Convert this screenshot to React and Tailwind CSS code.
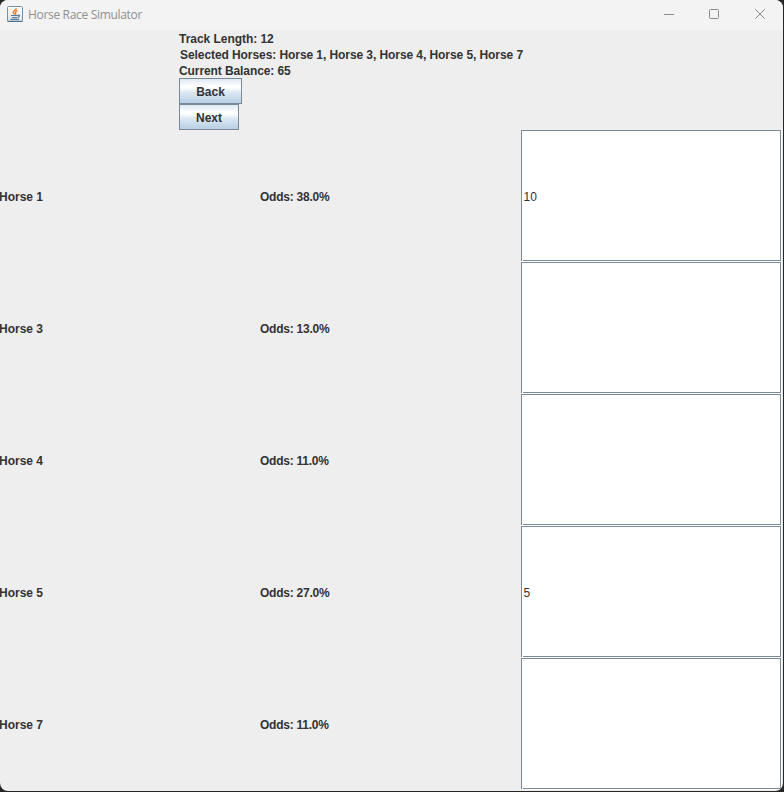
const horses = [
  { name: 'Horse 1', odds: '38.0%', bet: '10' },
  { name: 'Horse 3', odds: '13.0%', bet: '' },
  { name: 'Horse 4', odds: '11.0%', bet: '' },
  { name: 'Horse 5', odds: '27.0%', bet: '5' },
  { name: 'Horse 7', odds: '11.0%', bet: '' },
];

function JavaIcon() {
  return (
    <svg width="16" height="16" viewBox="0 0 16 16" fill="none">
      <defs>
        <linearGradient id="tile" x1="0" y1="0" x2="0" y2="1">
          <stop offset="0" stopColor="#ffffff" />
          <stop offset="1" stopColor="#dce4ea" />
        </linearGradient>
      </defs>
      <rect x=".5" y=".5" width="15" height="15" rx="1" fill="url(#tile)" stroke="#7590a5" />
      <path d="M.5 15.300h15" stroke="#46677f" />
      <path d="M9.200 2c.5 2-3 2.300-3 4.300.1 1.200 1.300 1.300 1.500 2.200M10.500 4.300C8.700 5.200 8 6 8.700 7c.3.600.1 1-.3 1.500" stroke="#ee7a22" strokeWidth="1.400" />
      <path d="M4 9.500h7M5 11.500h5M3.500 13.400h8.500M10.800 9.200c2.700-.5 2 1.700-.5 2.300" stroke="#557a98" strokeWidth="1.100" />
    </svg>
  );
}

function MetalButton({ children, className }) {
  return (
    <button
      className={`block h-[26px] border border-[#7a8a99] bg-[linear-gradient(to_bottom,#dde8f3_0%,#ffffff_30%,#ffffff_36%,#dde8f3_56%,#b8cfe5_100%)] pt-0.5 text-center font-bold leading-[22px] ${className}`}
    >
      {children}
    </button>
  );
}

function BetField({ value }) {
  return (
    <div className="h-[132px] w-[261px]">
      <div className="flex h-[131px] w-[260px] items-center border border-[#7a8a99] bg-white pl-[1.500px] pt-[3px] font-normal">
        {value}
      </div>
      <div className="-mt-px ml-px flex h-0.5 items-start justify-between">
        <span className="h-0.5 w-px bg-white" />
        <span className="mt-px h-px grow bg-white" />
      </div>
    </div>
  );
}

export default function App() {
  return (
    <div className="h-[792px] w-[784px] overflow-hidden bg-[#262626] pb-px pr-px">
      <div className="flex h-full flex-col overflow-hidden rounded-lg bg-[#eeeeee] font-['Liberation_Sans',Arial,sans-serif] text-[12px] font-bold text-[#333333]">
        <header className="flex h-[30px] shrink-0 items-center bg-[#f3f3f3] pl-[7px] font-['Open_Sans',sans-serif] font-normal text-[#8f8f8f]">
          <div className="-mt-[2px]"><JavaIcon /></div>
          <h1 className="ml-[5px] -mt-px text-[12px] tracking-[-0.320px]">Horse Race Simulator</h1>
          <svg className="ml-auto" width="143" height="30" viewBox="640 0 143 30" fill="none" stroke="#8b8b8b">
            <path d="M664 14.500h10" />
            <rect x="709.500" y="9.500" width="9" height="9" rx="1" />
            <path d="m755.300 9.300 9.400 9.400m0-9.400-9.400 9.400" />
          </svg>
        </header>
        <section className="h-[100px] shrink-0 whitespace-nowrap pl-[179px]">
          <p className="h-4 leading-[18px] tracking-[-0.040px]">Track Length: 12</p>
          <p className="h-4 pl-px leading-[18px] tracking-[-0.075px]">Selected Horses: Horse 1, Horse 3, Horse 4, Horse 5, Horse 7</p>
          <p className="h-4 leading-[18px] tracking-[-0.090px]">Current Balance: 65</p>
          <MetalButton className="w-[63px]">Back</MetalButton>
          <MetalButton className="w-[60px]">Next</MetalButton>
        </section>
        <main>
          {horses.map((horse) => (
            <div key={horse.name} className="grid h-[132px] grid-cols-[260px_261px_261px] items-center">
              <span className="-ml-px pt-px">{horse.name}</span>
              <span className="pt-px tracking-[-0.240px]">Odds: {horse.odds}</span>
              <div className="h-[132px] w-[261px] border-r border-white">
                <BetField value={horse.bet} />
              </div>
            </div>
          ))}
        </main>
      </div>
    </div>
  );
}
